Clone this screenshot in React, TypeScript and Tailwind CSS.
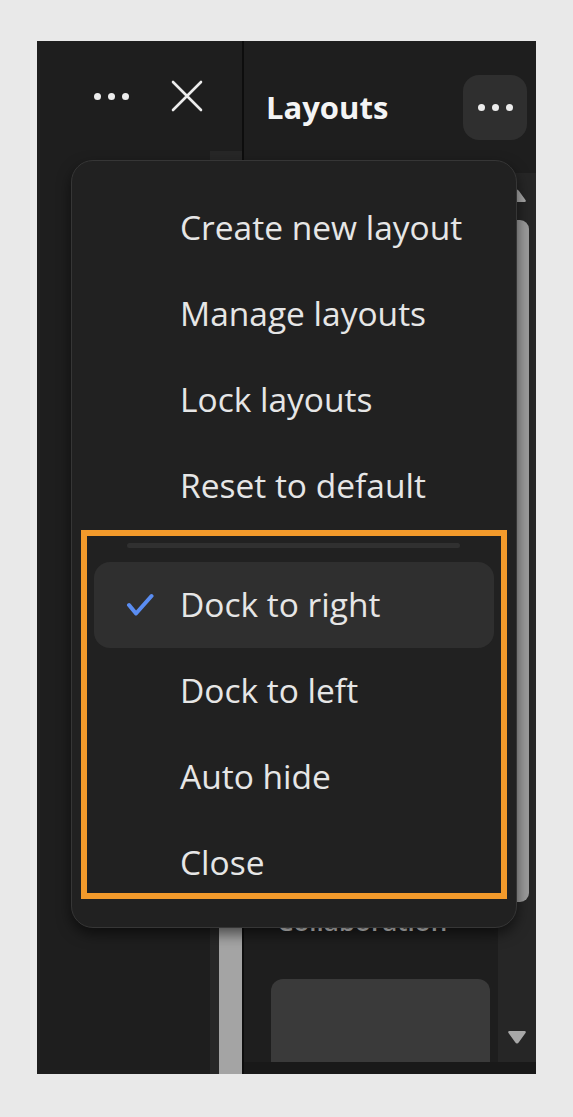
import React from 'react';

const Dots = ({ className = '' }: { className?: string }) => (
  <div className={`flex items-center gap-[7px] ${className}`}>
    <span className="w-[7px] h-[7px] rounded-full bg-[#ececec]" />
    <span className="w-[7px] h-[7px] rounded-full bg-[#ececec]" />
    <span className="w-[7px] h-[7px] rounded-full bg-[#ececec]" />
  </div>
);

const CloseIcon = () => (
  <svg width="32" height="32" viewBox="0 0 32 32" fill="none">
    <path d="M2 2 L30 30 M30 2 L2 30" stroke="#ececec" strokeWidth="2.6" strokeLinecap="round" />
  </svg>
);

const Check = () => (
  <svg width="28" height="24" viewBox="0 0 28 24" fill="none">
    <path d="M3 12 L10 20.5 L25.5 3" stroke="#5a8df2" strokeWidth="4" strokeLinecap="round" strokeLinejoin="round" />
  </svg>
);

const Arrow = ({ down = false }: { down?: boolean }) => (
  <svg width="20" height="15" viewBox="0 0 20 15" className={down ? 'rotate-180' : ''}>
    <path d="M10 1.5 Q11 1.5 12 3 L18.5 12 Q19.5 14 17.5 14 L2.5 14 Q0.5 14 1.5 12 L8 3 Q9 1.5 10 1.5 Z" fill="#a8a8a8" />
  </svg>
);

const MenuItem = ({ label, checked = false }: { label: string; checked?: boolean }) => (
  <div className={`mx-[22px] h-[86px] flex items-center pl-[32px] rounded-[16px] ${checked ? 'bg-[#2f2f2f]' : ''}`}>
    <div className="w-[28px] shrink-0 flex items-center">{checked && <Check />}</div>
    <span className="ml-[26px] text-[33.5px] font-medium leading-none text-[#e6e6e6] whitespace-nowrap">{label}</span>
  </div>
);

export default function App() {
  return (
    <div className="relative w-[573px] h-[1117px] bg-[#e9e9e9] pt-[41px] pl-[37px] font-['Open_Sans',sans-serif]">
      <div className="w-[499px] h-[1033px] flex bg-[#1e1e1e]">
        {/* left panel */}
        <div className="w-[205px] flex flex-col">
          <div className="h-[110px] flex items-center pl-[57px] gap-[42px]">
            <Dots />
            <CloseIcon />
          </div>
          <div className="flex-1 flex justify-end">
            <div className="w-[32px] bg-[#272727] flex flex-col">
              <div className="flex-1" />
              <div className="ml-auto w-[23px] h-[560px] bg-[#a4a4a4]" />
            </div>
          </div>
        </div>

        <div className="w-[2px] bg-[#0d0d0d]" />

        {/* right panel */}
        <div className="flex-1 flex flex-col">
          <div className="h-[132px] flex items-center justify-between pl-[22px] pr-[9px]">
            <span className="text-[31px] font-bold text-[#f4f4f4] leading-none">Layouts</span>
            <div className="w-[64px] h-[65px] rounded-[16px] bg-[#2f2f2f] flex items-center justify-center">
              <Dots />
            </div>
          </div>
          <div className="flex-1 flex">
            <div className="flex-1 flex flex-col justify-end pl-[27px]">
              <span className="ml-[6px] mb-[42px] text-[26px] leading-[32px] font-semibold text-[#dedede]">Collaboration</span>
              <div className="w-[219px] h-[83px] rounded-t-[12px] bg-[#3a3a3a]" />
            </div>
            <div className="w-[38px] bg-[#262626] flex flex-col items-center">
              <div className="mt-[15px]">
                <Arrow />
              </div>
              <div className="mt-[17px] w-[23px] h-[682px] rounded-[9px] bg-[#9c9c9c]" />
              <div className="flex-1" />
              <div className="mb-[17px]">
                <Arrow down />
              </div>
            </div>
          </div>
          <div className="h-[12px] bg-[#191919]" />
        </div>
      </div>

      {/* popup menu */}
      <div className="absolute left-[71px] top-[160px] w-[446px] h-[768px] rounded-[22px] bg-[#212121] border border-[#363636] shadow-[0_6px_14px_rgba(0,0,0,0.55)] pt-[24px]">
        <MenuItem label="Create new layout" />
        <MenuItem label="Manage layouts" />
        <MenuItem label="Lock layouts" />
        <MenuItem label="Reset to default" />
        <div className="ml-[55px] mr-[56px] my-[14px] h-[5px] rounded-full bg-[#303030]" />
        <MenuItem label="Dock to right" checked />
        <MenuItem label="Dock to left" />
        <MenuItem label="Auto hide" />
        <MenuItem label="Close" />
      </div>

      {/* highlight frame */}
      <div className="absolute left-[81px] top-[530px] w-[426px] h-[369px] border-[6px] border-[#f39a2b]" />
    </div>
  );
}
